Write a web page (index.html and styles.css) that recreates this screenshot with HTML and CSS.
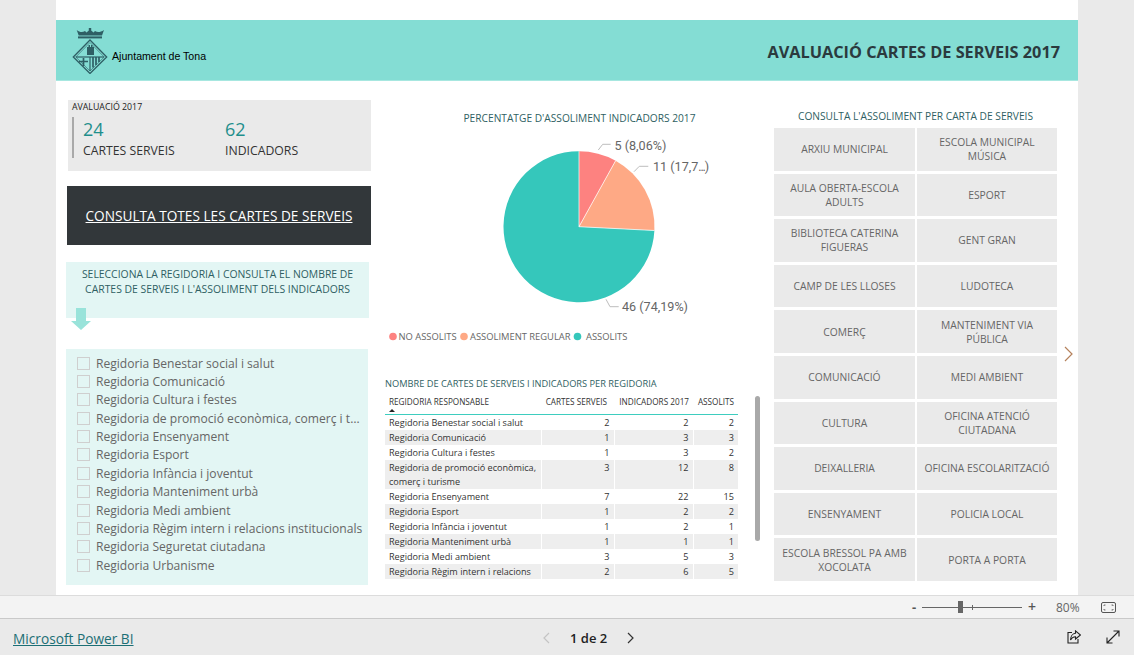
FILE: index.html
```html
<!DOCTYPE html>
<html lang="ca">
<head>
<meta charset="utf-8">
<title>Avaluació cartes de serveis 2017</title>
<link rel="stylesheet" href="styles.css">
</head>
<body>
<div class="viewer">
  <main class="canvas">
    <header class="banner">
      <div class="brand">
        <svg class="crest" width="36" height="48" viewBox="0 0 36 48" aria-hidden="true">
          <g fill="#2e5f65">
            <path d="M4.700 4 C8 6.500 10.500 6.500 13 5 L14.500 6.500 L16.800 4.500 V2 H19.200 V4.500 L21.500 6.500 L23 5 C25.500 6.500 28 6.500 32 4 L30 9.500 H6.700 Z"/>
            <rect x="6" y="10.400" width="24" height="2"/>
            <path d="M15 29 V21 H16.500 V19 H18 V21 H19 V19 H20.500 V21 H22 V29 Z"/>
          </g>
          <g fill="none" stroke="#2e5f65">
            <path d="M18 14 L34.700 31 L18 47.500 L1.300 31 Z" stroke-width="1.300"/>
            <path d="M18 16.500 L32.200 31 L18 45 L3.800 31 Z" stroke-width=".6"/>
            <path d="M3.800 31 H32.200" stroke-width="1.200"/>
            <path d="M18 31 V45" stroke-width="1.200"/>
            <path d="M11.500 32 V40 M7 35.500 H16" stroke-width="1.700"/>
            <path d="M21 31 V41.500 M24 31 V39 M27 31 V36" stroke-width="1.700"/>
          </g>
        </svg>
        <span class="brand-name">Ajuntament de Tona</span>
      </div>
      <h1 class="banner-title">AVALUACIÓ CARTES DE SERVEIS 2017</h1>
    </header>

    <div class="columns">
      <section class="col-left">
        <div class="kpi-card">
          <div class="kpi-caption">AVALUACIÓ 2017</div>
          <div class="kpi-row">
            <div class="kpi">
              <div class="kpi-value">24</div>
              <div class="kpi-label">CARTES SERVEIS</div>
            </div>
            <div class="kpi">
              <div class="kpi-value">62</div>
              <div class="kpi-label">INDICADORS</div>
            </div>
          </div>
        </div>
        <div class="cta"><a class="cta-link" href="#">CONSULTA TOTES LES CARTES DE SERVEIS</a></div>
        <div class="hint">
          SELECCIONA LA REGIDORIA I CONSULTA EL NOMBRE DE<br>CARTES DE SERVEIS I L'ASSOLIMENT DELS INDICADORS
          <svg class="hint-arrow" width="20" height="22" viewBox="0 0 20 22" aria-hidden="true">
            <path d="M5 0 H15 V13 H20 L10 22 L0 13 H5 Z" fill="#99e3da"/>
          </svg>
        </div>
        <ul class="slicer">
          <li class="slicer-item"><span class="check"></span><span class="slicer-text">Regidoria Benestar social i salut</span></li>
          <li class="slicer-item"><span class="check"></span><span class="slicer-text">Regidoria Comunicació</span></li>
          <li class="slicer-item"><span class="check"></span><span class="slicer-text">Regidoria Cultura i festes</span></li>
          <li class="slicer-item"><span class="check"></span><span class="slicer-text">Regidoria de promoció econòmica, comerç i turisme</span></li>
          <li class="slicer-item"><span class="check"></span><span class="slicer-text">Regidoria Ensenyament</span></li>
          <li class="slicer-item"><span class="check"></span><span class="slicer-text">Regidoria Esport</span></li>
          <li class="slicer-item"><span class="check"></span><span class="slicer-text">Regidoria Infància i joventut</span></li>
          <li class="slicer-item"><span class="check"></span><span class="slicer-text">Regidoria Manteniment urbà</span></li>
          <li class="slicer-item"><span class="check"></span><span class="slicer-text">Regidoria Medi ambient</span></li>
          <li class="slicer-item"><span class="check"></span><span class="slicer-text">Regidoria Règim intern i relacions institucionals</span></li>
          <li class="slicer-item"><span class="check"></span><span class="slicer-text">Regidoria Seguretat ciutadana</span></li>
          <li class="slicer-item"><span class="check"></span><span class="slicer-text">Regidoria Urbanisme</span></li>
        </ul>
      </section>

      <section class="col-mid">
        <h2 class="chart-title">PERCENTATGE D'ASSOLIMENT INDICADORS 2017</h2>
        <svg class="pie" width="353" height="216" viewBox="385 128 353 216" role="img">
          <path d="M579 226.7 L579 151.2 A75.5 75.5 0 0 1 615.64 160.7 Z" fill="#fd8280"/>
          <path d="M579 226.7 L615.64 160.7 A75.5 75.5 0 0 1 654.4 230.5 Z" fill="#fea985"/>
          <path d="M579 226.7 L654.4 230.5 A75.5 75.5 0 1 1 579 151.2 Z" fill="#35c7bb"/>
          <path d="M579 226.7 L579 151.2 M579 226.7 L615.64 160.7 M579 226.7 L654.4 230.5" stroke="#fff" stroke-width=".7" fill="none"/>
          <g class="leader">
            <path d="M598.3 150 L602.7 144.3 H610.7"/>
            <path d="M634 171.7 L639.3 166.3 H648.3"/>
            <path d="M606 299.3 L610 306.7 H618.7"/>
          </g>
          <g class="pie-label">
            <text x="614.5" y="149.5">5 (8,06%)</text>
            <text x="653" y="171">11 (17,7<tspan class="tight">...</tspan>)</text>
            <text x="622" y="311">46 (74,19%)</text>
          </g>
          <g class="legend-text">
            <circle cx="393" cy="336.500" r="3.8" fill="#fd8280"/>
            <text x="398.500" y="340">NO ASSOLITS</text>
            <circle cx="464" cy="336.500" r="3.8" fill="#fea985"/>
            <text x="470" y="340">ASSOLIMENT REGULAR</text>
            <circle cx="577.500" cy="336.500" r="3.8" fill="#35c7bb"/>
            <text x="586" y="340">ASSOLITS</text>
          </g>
        </svg>
        <h2 class="table-title">NOMBRE DE CARTES DE SERVEIS I INDICADORS PER REGIDORIA</h2>
        <table class="grid">
          <colgroup><col class="c-name"><col class="c-a"><col class="c-b"><col class="c-c"></colgroup>
          <thead>
            <tr><th class="sorted">REGIDORIA RESPONSABLE</th><th class="th-a">CARTES SERVEIS</th><th>INDICADORS 2017</th><th>ASSOLITS</th></tr>
          </thead>
          <tbody>
            <tr><td>Regidoria Benestar social i salut</td><td>2</td><td>2</td><td>2</td></tr>
            <tr><td>Regidoria Comunicació</td><td>1</td><td>3</td><td>3</td></tr>
            <tr><td>Regidoria Cultura i festes</td><td>1</td><td>3</td><td>2</td></tr>
            <tr><td>Regidoria de promoció econòmica, comerç i turisme</td><td>3</td><td>12</td><td>8</td></tr>
            <tr><td>Regidoria Ensenyament</td><td>7</td><td>22</td><td>15</td></tr>
            <tr><td>Regidoria Esport</td><td>1</td><td>2</td><td>2</td></tr>
            <tr><td>Regidoria Infància i joventut</td><td>1</td><td>2</td><td>1</td></tr>
            <tr><td>Regidoria Manteniment urbà</td><td>1</td><td>1</td><td>1</td></tr>
            <tr><td>Regidoria Medi ambient</td><td>3</td><td>5</td><td>3</td></tr>
            <tr><td>Regidoria Règim intern i relacions</td><td>2</td><td>6</td><td>5</td></tr>
          </tbody>
        </table>
        <div class="scroll-thumb"></div>
      </section>

      <section class="col-right">
        <h2 class="tiles-title">CONSULTA L'ASSOLIMENT PER CARTA DE SERVEIS</h2>
        <div class="tiles">
          <div class="tile">ARXIU MUNICIPAL</div>
          <div class="tile">AULA OBERTA-ESCOLA ADULTS</div>
          <div class="tile">BIBLIOTECA CATERINA FIGUERAS</div>
          <div class="tile">CAMP DE LES LLOSES</div>
          <div class="tile">COMERÇ</div>
          <div class="tile">COMUNICACIÓ</div>
          <div class="tile">CULTURA</div>
          <div class="tile">DEIXALLERIA</div>
          <div class="tile">ENSENYAMENT</div>
          <div class="tile">ESCOLA BRESSOL PA AMB XOCOLATA</div>
          <div class="tile">ESCOLA MUNICIPAL MÚSICA</div>
          <div class="tile">ESPORT</div>
          <div class="tile">GENT GRAN</div>
          <div class="tile">LUDOTECA</div>
          <div class="tile">MANTENIMENT VIA PÚBLICA</div>
          <div class="tile">MEDI AMBIENT</div>
          <div class="tile">OFICINA ATENCIÓ CIUTADANA</div>
          <div class="tile">OFICINA ESCOLARITZACIÓ</div>
          <div class="tile">POLICIA LOCAL</div>
          <div class="tile">PORTA A PORTA</div>
        </div>
      </section>
    </div>

    <svg class="next-page" width="9" height="16" viewBox="0 0 9 16" aria-hidden="true">
      <path d="M1 1 L8 8 L1 15" fill="none" stroke="#b5825c" stroke-width="1.2"/>
    </svg>
  </main>

  <div class="zoombar">
    <span class="zoom-sign">-</span>
    <span class="slider"><span class="slider-tick"></span><span class="slider-thumb"></span></span>
    <span class="zoom-sign plus">+</span>
    <span class="zoom-value">80%</span>
    <svg class="fit" width="15" height="11" viewBox="0 0 15 11" aria-hidden="true">
      <rect x=".5" y=".5" width="14" height="10" rx="1.500" fill="none" stroke="#555"/>
      <path d="M3 4 V3 H4.500 M12 4 V3 H10.500 M3 7 V8 H4.500 M12 7 V8 H10.500" fill="none" stroke="#555" stroke-width=".8"/>
    </svg>
  </div>

  <footer class="footer">
    <a class="pbi-link" href="#">Microsoft Power BI</a>
    <nav class="pager">
      <svg width="8" height="12" viewBox="0 0 8 12" aria-hidden="true"><path d="M7 1 L2 6 L7 11" fill="none" stroke="#c4c4c4" stroke-width="1.200"/></svg>
      <span class="pager-text">1 de 2</span>
      <svg width="8" height="12" viewBox="0 0 8 12" aria-hidden="true"><path d="M1 1 L6 6 L1 11" fill="none" stroke="#333" stroke-width="1.200"/></svg>
    </nav>
    <div class="footer-actions">
      <svg width="14" height="14" viewBox="0 0 14 14" aria-hidden="true">
        <path d="M5 2.500 H1 V13 H11 V9" fill="none" stroke="#222" stroke-width="1.100"/>
        <path d="M8.500 .8 L13.500 5 L8.500 9 V6.800 C6 6.800 4.500 8 3.500 10 C3.500 6.500 5.500 3.600 8.500 3.300 Z" fill="none" stroke="#222" stroke-width="1.100"/>
      </svg>
      <svg width="14" height="14" viewBox="0 0 14 14" aria-hidden="true">
        <path d="M1 13 L13 1 M7.500 1 H13 V6.500 M1 7.500 V13 H6.500" fill="none" stroke="#222" stroke-width="1.100"/>
      </svg>
    </div>
  </footer>
</div>
</body>
</html>
```

FILE: styles.css
```css
* { box-sizing: border-box; }

html, body {
  margin: 0;
  padding: 0;
  height: 100%;
}

body {
  background: #eaeaea;
  font-family: "Open Sans", "Noto Sans", sans-serif;
  overflow: hidden;
}

.viewer {
  display: flex;
  flex-direction: column;
  width: 1134px;
  height: 655px;
}

.canvas {
  position: relative;
  width: 1022px;
  height: 595px;
  margin-left: 56px;
  padding-top: 20px;
  background: #fff;
  flex: none;
}

.banner {
  display: flex;
  align-items: center;
  justify-content: space-between;
  height: 61px;
  padding: 0 18px 0 16px;
  background: #84ddd4;
  border-bottom: 1px solid #a7e7e0;
}

.brand {
  display: flex;
  align-items: center;
  gap: 4px;
  margin-top: 6px;
}

.crest { display: block; margin-top: -6px; }

.brand-name {
  font-family: "Liberation Sans", Arial, sans-serif;
  font-size: 10.6px;
  color: #000;
  margin-top: 6px;
}

.banner-title {
  margin: 4px 0 0;
  font-size: 16.3px;
  font-weight: 700;
  color: #2b3a3e;
}

.columns {
  display: grid;
  grid-template-columns: 319px 389px 283px;
  padding-left: 10px;
}

.col-left { padding-top: 19px; }

.kpi-card {
  width: 303px;
  height: 71px;
  margin-left: 2px;
  padding: 1px 4px 0;
  background: #eaeaea;
}

.kpi-caption {
  font-size: 8.8px;
  line-height: 12px;
  color: #222;
}

.kpi-row {
  display: flex;
  margin-top: 4px;
  height: 41px;
  border-left: 2px solid #a9a9a9;
}

.kpi { width: 142px; padding-left: 9px; }

.kpi-value {
  font-size: 18px;
  line-height: 25px;
  color: #1f8f8c;
}

.kpi-label {
  font-size: 12.25px;
  line-height: 17px;
  color: #333;
}

.cta {
  display: flex;
  align-items: center;
  justify-content: center;
  width: 304px;
  height: 59px;
  margin: 15px 0 0 1px;
  background: #32373a;
}

.cta-link {
  color: #fff;
  font-size: 13.65px;
  text-decoration: underline;
}

.hint {
  position: relative;
  width: 303px;
  height: 56px;
  margin-top: 17px;
  padding-top: 5px;
  background: #e3f6f4;
  font-size: 10.4px;
  line-height: 15px;
  color: #2f5f63;
  text-align: center;
}

.hint-arrow {
  position: absolute;
  left: 5px;
  top: 46px;
}

.slicer {
  width: 302px;
  height: 236px;
  margin: 31px 0 0;
  padding: 5px 0 0 11px;
  list-style: none;
  background: #e3f6f4;
}

.slicer-item {
  display: flex;
  align-items: center;
  height: 18.36px;
  font-size: 12.1px;
  color: #666;
}

.check {
  flex: none;
  width: 13px;
  height: 13px;
  margin-right: 6px;
  border: 1px solid #cfcfcf;
}

.slicer-text {
  overflow: hidden;
  white-space: nowrap;
  text-overflow: ellipsis;
  width: 267px;
}

.col-mid { position: relative; }

.chart-title {
  margin: 0;
  width: 353px;
  height: 47px;
  padding: 30px 0 0 36px;
  font-size: 10.2px;
  line-height: 14px;
  font-weight: 400;
  color: #2f5f63;
  text-align: center;
  white-space: nowrap;
}

.pie { display: block; }

.leader path { fill: none; stroke: #bdbdbd; stroke-width: 1; }

.pie-label text {
  font-family: "Roboto", sans-serif;
  font-size: 12.6px;
  fill: #666;
}

.pie-label .tight { letter-spacing: -1.2px; }

.legend-text text {
  font-size: 9.4px;
  fill: #666;
}

.table-title {
  margin: 0;
  padding-top: 33px;
  font-size: 9.25px;
  line-height: 13px;
  font-weight: 400;
  color: #2f5f63;
}

.grid {
  width: 353px;
  margin-top: 5px;
  border-collapse: collapse;
  table-layout: fixed;
  font-size: 9.1px;
}

.c-name { width: 156px; }
.c-a { width: 73px; }
.c-b { width: 79px; }
.c-c { width: 45px; }

.grid th {
  height: 19px;
  padding: 0 4px 5px 0;
  font-weight: 400;
  line-height: 13px;
  font-size: 8.2px;
  text-align: right;
  vertical-align: top;
  color: #333;
  white-space: nowrap;
  border-bottom: 1px solid #3ecdbf;
}

.grid th.th-a { padding-right: 7px; }

.grid th.sorted {
  position: relative;
  padding-left: 4px;
  text-align: left;
}

.grid th.sorted::after {
  content: "";
  position: absolute;
  left: 4px;
  top: 14px;
  border-left: 3px solid transparent;
  border-right: 3px solid transparent;
  border-bottom: 3px solid #222;
}

.grid td {
  padding: 1px 4px 0 4px;
  height: 15px;
  line-height: 14px;
  color: #333;
  text-align: right;
  vertical-align: top;
  border-left: 1px solid #fff;
}

.grid td:first-child {
  padding-right: 2px;
  text-align: left;
  border-left: 0;
}

.grid tbody tr:nth-child(even) td { background: #eeeeee; }

.scroll-thumb {
  position: absolute;
  left: 370px;
  top: 315px;
  width: 5px;
  height: 145px;
  border-radius: 3px;
  background: #a9a9a9;
}

.tiles-title {
  margin: 0;
  height: 47px;
  padding-top: 28px;
  font-size: 10.2px;
  line-height: 14px;
  font-weight: 400;
  color: #2f5f63;
  text-align: center;
}

.tiles {
  display: grid;
  grid-auto-flow: column;
  grid-template-columns: 141px 140px;
  grid-template-rows: repeat(10, 1fr);
  column-gap: 2px;
  row-gap: 3px;
  height: 453px;
}

.tile {
  display: flex;
  align-items: center;
  justify-content: center;
  padding: 0 5px;
  background: #eaeaea;
  font-size: 10.3px;
  line-height: 14px;
  color: #666;
  text-align: center;
}

.next-page {
  position: absolute;
  left: 1008px;
  top: 346px;
}

.zoombar {
  display: flex;
  align-items: center;
  flex: none;
  height: 24px;
  padding-left: 912px;
  background: #f3f3f3;
  border-top: 1px solid #dcdcdc;
  border-bottom: 1px solid #c9c9c9;
}

.zoom-sign {
  width: 10px;
  font-size: 13px;
  font-weight: 700;
  line-height: 20px;
  color: #555;
}

.zoom-sign.plus { width: 14px; margin-left: 6px; font-weight: 600; font-size: 14px; }

.slider {
  position: relative;
  width: 100px;
  height: 1px;
  background: #666;
}

.slider-thumb {
  position: absolute;
  left: 36px;
  top: -6px;
  width: 5px;
  height: 12px;
  background: #666;
}

.slider-tick {
  position: absolute;
  left: 50px;
  top: -2px;
  width: 1px;
  height: 5px;
  background: #666;
}

.zoom-value {
  width: 45px;
  margin-left: 14px;
  font-size: 12px;
  color: #666;
}

.footer {
  position: relative;
  display: flex;
  align-items: center;
  justify-content: space-between;
  flex: 1;
  padding: 0 14px 0 13px;
  background: #eaeaea;
}

.pbi-link {
  margin-top: 3px;
  color: #1c6f75;
  font-size: 13.7px;
  text-decoration: underline;
}

.pager {
  position: absolute;
  left: 542px;
  top: 2px;
  bottom: 0;
  display: flex;
  align-items: center;
  gap: 20px;
}

.pager-text {
  font-size: 13px;
  font-weight: 600;
  color: #222;
}

.footer-actions {
  display: flex;
  align-items: center;
  gap: 25px;
}
```
